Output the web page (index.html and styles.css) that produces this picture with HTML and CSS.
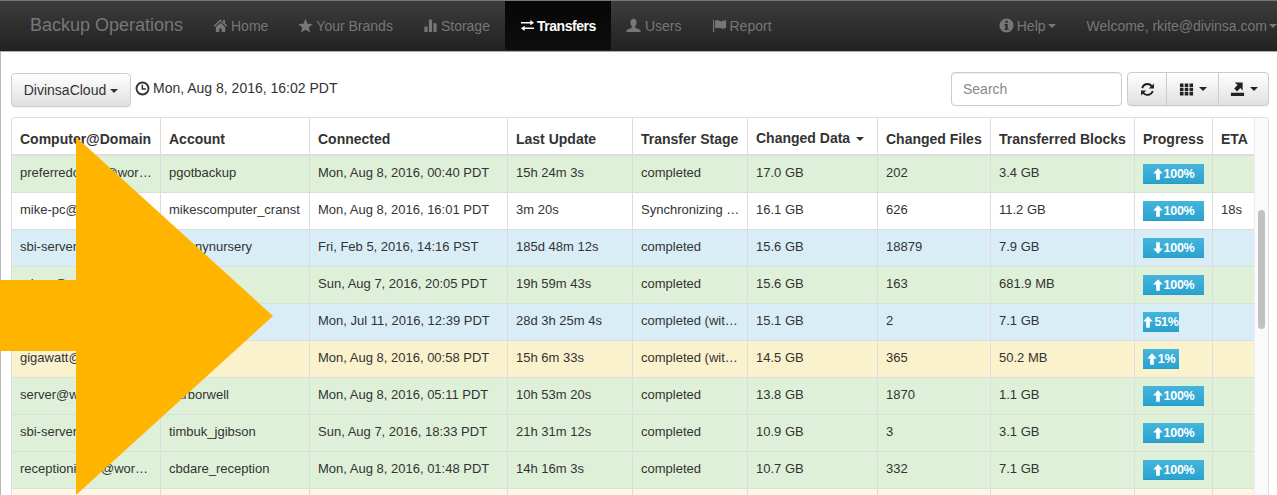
FILE: index.html
```html
<!DOCTYPE html>
<html lang="en">
<head>
<meta charset="utf-8">
<title>Backup Operations</title>
<link rel="stylesheet" href="styles.css">
</head>
<body>
<svg class="defs" aria-hidden="true">
  <symbol id="i-home" viewBox="0 0 16 16"><path d="M8 1.200 .6 8.200 1.600 9.200 8 3.400l6.400 5.800 1-1-2.600-2.500V2.200h-2v2.600zM3 9.600V15h3.700v-3.800h2.600V15H13V9.600L8 5z"/></symbol>
  <symbol id="i-star" viewBox="0 0 16 16"><path d="M8 .8l2.200 5.200 5.600.4-4.300 3.600 1.400 5.400L8 12.500l-4.900 2.900 1.400-5.400L.2 6.400 5.800 6z"/></symbol>
  <symbol id="i-stats" viewBox="0 0 16 16"><path d="M1.500 9h3.400v6H1.500zM6.300 1.500h3.400V15H6.300zM11.100 5.500h3.400V15h-3.400z"/></symbol>
  <symbol id="i-transfer" viewBox="0 0 16 16"><path d="M1 4.200h10V2.200L15 5l-4 2.800V5.800H1zM15 10.200H5V8.200L1 11l4 2.800v-2H15z"/></symbol>
  <symbol id="i-user" viewBox="0 0 16 16"><path d="M8 .8c2.200 0 3.300 1.700 3.300 3.900 0 1.800-.8 3.300-1.600 4.100v1.400l5 2.300c.5.300.8.700.8 1.200v1.300H.5v-1.300c0-.5.3-.9.800-1.200l5-2.300V8.800c-.8-.8-1.600-2.300-1.600-4.100C4.700 2.500 5.800.8 8 .8z"/></symbol>
  <symbol id="i-flag" viewBox="0 0 16 16"><path d="M1 2h1.300v13H1zM3.300 3c1.500-1 3-1 4.500-.2s3.200 1 5-.2L15 2v8.500c-2 1.300-3.700 1.200-5.300.4s-3-.8-6.400.1z"/></symbol>
  <symbol id="i-info" viewBox="0 0 16 16"><path fill-rule="evenodd" d="M8 .5a7.500 7.500 0 1 0 0 15 7.500 7.500 0 0 0 0-15zM6.700 3h2.600v2.300H6.700zM5.800 6.500h3.500v5h1v1.400H5.800v-1.400h1V8h-1z"/></symbol>
  <symbol id="i-time" viewBox="0 0 16 16"><path fill-rule="evenodd" d="M8 .6a7.400 7.400 0 1 0 0 14.800A7.400 7.400 0 0 0 8 .6zm0 2a5.400 5.400 0 1 1 0 10.800A5.400 5.400 0 0 1 8 2.600zM7 4h1.600v3.800h3v1.600H7z"/></symbol>
  <symbol id="i-refresh" viewBox="0 0 16 16"><path d="M8 1c2 0 3.800.9 5 2.400L14.900 1.500V7H9.400l2.100-2.100A4.800 4.800 0 0 0 3.300 6.800L1.400 6.100A6.900 6.900 0 0 1 8 1zM1.100 9h5.500l-2.100 2.100a4.800 4.800 0 0 0 8.200-1.900l1.900.7A6.900 6.900 0 0 1 3 12.600L1.100 14.500z"/></symbol>
  <symbol id="i-th" viewBox="0 0 16 16"><path d="M1 1.500h3.800v3.800H1zM6.100 1.500h3.800v3.800H6.100zM11.200 1.500H15v3.800h-3.800zM1 6.100h3.800v3.800H1zM6.100 6.100h3.800v3.800H6.100zM11.200 6.100H15v3.800h-3.800zM1 10.700h3.800v3.800H1zM6.100 10.700h3.800v3.800H6.100zM11.200 10.700H15v3.800h-3.800z"/></symbol>
  <symbol id="i-export" viewBox="0 0 16 16"><path d="M1 11.500h14V15H1zM5 .5h8.500V9L11 6.500 7.500 10 4.500 7 8 3.300z"/></symbol>
  <symbol id="i-up" viewBox="0 0 12 14"><path d="M6 0l5.800 6.300H8.200V14H3.800V6.300H.2z"/></symbol>
  <symbol id="i-down" viewBox="0 0 12 14"><path d="M6 14 .2 7.700h3.600V0h4.400v7.700h3.600z"/></symbol>
</svg>

<header class="navbar">
  <a class="brand">Backup Operations</a>
  <nav class="nav">
    <a class="nav-item"><svg class="ni"><use href="#i-home"/></svg>Home</a>
    <a class="nav-item"><svg class="ni"><use href="#i-star"/></svg>Your Brands</a>
    <a class="nav-item"><svg class="ni"><use href="#i-stats"/></svg>Storage</a>
    <a class="nav-item active"><svg class="ni tight"><use href="#i-transfer"/></svg>Transfers</a>
    <a class="nav-item"><svg class="ni gap"><use href="#i-user"/></svg>Users</a>
    <a class="nav-item"><svg class="ni"><use href="#i-flag"/></svg>Report</a>
  </nav>
  <nav class="nav nav-right">
    <a class="nav-item"><svg class="ni"><use href="#i-info"/></svg>Help<span class="caret nav-caret"></span></a>
    <a class="nav-item">Welcome, rkite@divinsa.com<span class="caret nav-caret"></span></a>
  </nav>
</header>

<main class="main">
  <div class="toolbar">
    <button class="btn btn-cloud">DivinsaCloud<span class="caret"></span></button>
    <div class="clock"><svg class="ti"><use href="#i-time"/></svg>Mon, Aug 8, 2016, 16:02 PDT</div>
    <input class="search" placeholder="Search">
    <div class="btn-group">
      <button class="btn seg seg-a"><svg class="ti"><use href="#i-refresh"/></svg></button>
      <button class="btn seg seg-b"><svg class="ti"><use href="#i-th"/></svg><span class="caret"></span></button>
      <button class="btn seg seg-c"><svg class="ti"><use href="#i-export"/></svg><span class="caret"></span></button>
    </div>
  </div>

  <div class="panel">
    <table class="grid">
      <colgroup>
        <col class="c1"><col class="c2"><col class="c3"><col class="c4"><col class="c5"><col class="c6"><col class="c7"><col class="c8"><col class="c9"><col class="c10">
      </colgroup>
      <thead>
        <tr>
          <th>Computer@Domain</th><th>Account</th><th>Connected</th><th>Last Update</th><th>Transfer Stage</th>
          <th><span class="sorted">Changed Data<span class="caret"></span></span></th>
          <th>Changed Files</th><th>Transferred Blocks</th><th>Progress</th><th>ETA</th>
        </tr>
      </thead>
      <tbody>
        <tr class="ok">
          <td>preferredcomp@workgroup</td><td>pgotbackup</td><td>Mon, Aug 8, 2016, 00:40 PDT</td><td>15h 24m 3s</td><td>completed</td><td>17.0 GB</td><td>202</td><td>3.4 GB</td>
          <td><div class="bar full"><svg class="ar"><use href="#i-up"/></svg>100%</div></td><td></td>
        </tr>
        <tr>
          <td>mike-pc@wg</td><td>mikescomputer_cranst</td><td>Mon, Aug 8, 2016, 16:01 PDT</td><td>3m 20s</td><td>Synchronizing …</td><td>16.1 GB</td><td>626</td><td>11.2 GB</td>
          <td><div class="bar full"><svg class="ar"><use href="#i-up"/></svg>100%</div></td><td>18s</td>
        </tr>
        <tr class="info">
          <td>sbi-server@wg</td><td>greenynursery</td><td>Fri, Feb 5, 2016, 14:16 PST</td><td>185d 48m 12s</td><td>completed</td><td>15.6 GB</td><td>18879</td><td>7.9 GB</td>
          <td><div class="bar full"><svg class="ar"><use href="#i-down"/></svg>100%</div></td><td></td>
        </tr>
        <tr class="ok">
          <td>mirror@wg</td><td>mirror</td><td>Sun, Aug 7, 2016, 20:05 PDT</td><td>19h 59m 43s</td><td>completed</td><td>15.6 GB</td><td>163</td><td>681.9 MB</td>
          <td><div class="bar full"><svg class="ar"><use href="#i-up"/></svg>100%</div></td><td></td>
        </tr>
        <tr class="info">
          <td>office@wg</td><td>office</td><td>Mon, Jul 11, 2016, 12:39 PDT</td><td>28d 3h 25m 4s</td><td>completed (with errors)</td><td>15.1 GB</td><td>2</td><td>7.1 GB</td>
          <td><div class="bar part"><svg class="ar"><use href="#i-up"/></svg>51%</div></td><td></td>
        </tr>
        <tr class="warn">
          <td>gigawatt@wg</td><td>giga</td><td>Mon, Aug 8, 2016, 00:58 PDT</td><td>15h 6m 33s</td><td>completed (with errors)</td><td>14.5 GB</td><td>365</td><td>50.2 MB</td>
          <td><div class="bar part"><svg class="ar"><use href="#i-up"/></svg>1%</div></td><td></td>
        </tr>
        <tr class="ok">
          <td>server@wg</td><td>barborwell</td><td>Mon, Aug 8, 2016, 05:11 PDT</td><td>10h 53m 20s</td><td>completed</td><td>13.8 GB</td><td>1870</td><td>1.1 GB</td>
          <td><div class="bar full"><svg class="ar"><use href="#i-up"/></svg>100%</div></td><td></td>
        </tr>
        <tr class="ok">
          <td>sbi-server@wg</td><td>timbuk_jgibson</td><td>Sun, Aug 7, 2016, 18:33 PDT</td><td>21h 31m 12s</td><td>completed</td><td>10.9 GB</td><td>3</td><td>3.1 GB</td>
          <td><div class="bar full"><svg class="ar"><use href="#i-up"/></svg>100%</div></td><td></td>
        </tr>
        <tr class="ok">
          <td>receptionist05@workgroup</td><td>cbdare_reception</td><td>Mon, Aug 8, 2016, 01:48 PDT</td><td>14h 16m 3s</td><td>completed</td><td>10.7 GB</td><td>332</td><td>7.1 GB</td>
          <td><div class="bar full"><svg class="ar"><use href="#i-up"/></svg>100%</div></td><td></td>
        </tr>
        <tr class="warn-pale"><td></td><td></td><td></td><td></td><td></td><td></td><td></td><td></td><td></td><td></td></tr>
      </tbody>
    </table>
    <div class="track"><div class="thumb"></div></div>
  </div>
</main>

<svg class="callout" viewBox="0 0 273 358" aria-hidden="true"><path d="M0 143H76V0L273 179 76 358V214H0z"/></svg>
</body>
</html>
```

FILE: styles.css
```css
* { box-sizing: border-box; }
html, body { margin: 0; height: 495px; overflow: hidden; background: #fff; }
body { font-family: "Liberation Sans", Arial, sans-serif; font-size: 14px; color: #333; position: relative; }
.defs { display: none; }

.navbar {
  height: 52px;
  display: flex;
  align-items: center;
  padding-bottom: 1px;
  background: linear-gradient(#3c3c3c, #222);
  border-top: 1px solid #777;
  border-bottom: 1px solid #aaa;
  color: #777;
}
.brand { font-size: 18px; padding-left: 30px; width: 198px; flex: none; white-space: nowrap; color: #777; }
.nav { display: flex; height: 100%; align-items: stretch; }
.nav-right { margin-left: auto; }
.nav-item { display: flex; align-items: center; padding: 0 15px; white-space: nowrap; }
.nav-item.active { color: #fff; font-weight: 700; letter-spacing: -.45px; background: linear-gradient(#060606, #0e0e0e); }
.ni { width: 15px; height: 15px; margin-right: 3px; fill: currentColor; flex: none; }
.ni.gap { margin-right: 4px; }
.ni.tight { margin-right: 2px; }
.caret {
  display: inline-block;
  width: 0; height: 0;
  margin-left: 4px;
  vertical-align: middle;
  border-top: 4px solid currentColor;
  border-left: 4px solid transparent;
  border-right: 4px solid transparent;
}
.nav-caret { margin-left: 2px; }
.nav-right .nav-item:last-child { padding: 0 0 0 16px; }

.main { height: 443px; padding: 20px 8px 0 10px; border-left: 1px solid #b8b8b8; }
.toolbar { display: flex; align-items: flex-start; height: 35px; margin-bottom: 10px; }
.btn {
  height: 34px;
  font: 14px "Liberation Sans", Arial, sans-serif;
  color: #333;
  background: linear-gradient(#fff, #e0e0e0);
  border: 1px solid #ccc;
  border-radius: 4px;
  box-shadow: 0 1px 0 rgba(0,0,0,.05);
  padding: 0;
}
.btn-cloud { width: 120px; margin-top: 1px; }
.clock { margin-left: 4px; margin-top: 8px; display: flex; align-items: center; white-space: nowrap; }
.ti { width: 15px; height: 15px; fill: currentColor; margin-right: 3px; flex: none; }
.search {
  margin-left: auto;
  width: 171px;
  height: 34px;
  padding: 0 11px;
  font: 14px "Liberation Sans", Arial, sans-serif;
  border: 1px solid #ccc;
  border-radius: 4px;
  box-shadow: inset 0 1px 1px rgba(0,0,0,.075);
}
.search::placeholder { color: #888; opacity: 1; }
.btn-group { display: flex; margin-left: 5px; }
.seg { display: flex; align-items: center; justify-content: center; border-radius: 0; margin-left: -1px; color: #222; }
.seg .ti { margin-right: 0; }
.seg-a { width: 40px; margin-left: 0; border-radius: 4px 0 0 4px; }
.seg-b { width: 53px; }
.seg-c { width: 51px; border-radius: 0 4px 4px 0; }
.seg .caret { margin-left: 5px; }

.panel { display: flex; height: 400px; border: 1px solid #ddd; border-bottom: 0; border-radius: 4px 4px 0 0; overflow: hidden; }
.grid { table-layout: fixed; width: 1242px; flex: none; border-collapse: separate; border-spacing: 0; align-self: flex-start; }
.c1, .c2 { width: 149px; }
.c3 { width: 198px; }
.c4 { width: 125px; }
.c5 { width: 115px; }
.c6 { width: 130px; }
.c7 { width: 113px; }
.c8 { width: 144px; }
.c9 { width: 78px; }
.c10 { width: 41px; }
th, td {
  overflow: hidden;
  white-space: nowrap;
  text-overflow: ellipsis;
  text-align: left;
  vertical-align: top;
  border-right: 1px solid #ddd;
  padding: 7px 8px 0;
}
th:last-child, td:last-child { border-right: 0; padding-right: 0; }
td:nth-child(5) { padding-right: 6px; }
th { height: 38px; padding-top: 11px; font-size: 14px; line-height: 20px; font-weight: 700; color: #333; background: #fff; border-bottom: 2px solid #ddd; }
td { height: 37px; font-size: 13px; line-height: 19px; color: #333; border-bottom: 1px solid #ddd; }
.sorted { position: relative; top: -1px; }
.sorted .caret { margin-left: 6px; }
.ok td { background: #dff0d8; }
.info td { background: #d9edf7; }
.warn td { background: #faf2cc; }
.warn-pale td { background: #fcf8e3; }

.bar {
  display: flex;
  align-items: center;
  justify-content: center;
  height: 20px;
  margin-top: 1px;
  color: #fff;
  font-size: 12.5px;
  letter-spacing: -.3px;
  font-weight: 700;
  line-height: 20px;
  background: linear-gradient(#45b5dc, #2aa3cf);
  border-bottom: 1px solid #2a9ac4;
  white-space: nowrap;
}
.full { width: 61px; }
.part { width: 36px; }
.ar { width: 10px; height: 12px; margin-right: 1px; fill: #fff; flex: none; }

.track { flex: 1; padding: 92px 3px 0; background: #fafafa; border-left: 1px solid #eee; }
.thumb { height: 119px; background: #c1c1c1; border-radius: 4px; }

.callout { position: absolute; left: 0; top: 137px; width: 273px; height: 358px; fill: #ffb400; }
```
